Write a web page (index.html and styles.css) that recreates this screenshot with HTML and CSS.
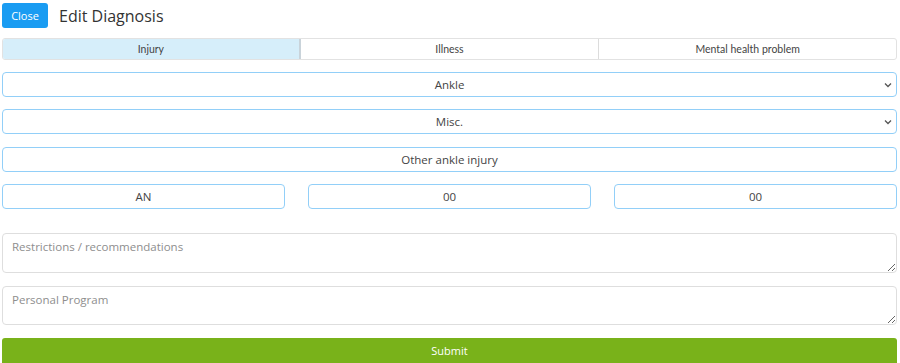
FILE: index.html
```html
<!DOCTYPE html>
<html lang="en">
<head>
    <meta charset="UTF-8">
    <meta name="viewport" content="width=device-width, initial-scale=1.0">
    <title>Edit Diagnosis</title>
    <link rel="stylesheet" href="styles.css">
</head>
<body>
    <div class="container">
        <div class="header">
            <button class="btn-close" type="button">Close</button>
            <h1>Edit Diagnosis</h1>
        </div>
        <div class="tabs">
            <div class="tab active">Injury</div>
            <div class="tab">Illness</div>
            <div class="tab">Mental health problem</div>
        </div>
        <form id="diagnosisForm">
            <div class="select-wrap">
                <select class="field">
                    <option>Ankle</option>
                </select>
                <svg class="chevron" width="8" height="6" viewBox="0 0 8 6"><path d="M1 1.5 L4 4.5 L7 1.5" fill="none" stroke="#555" stroke-width="1.3"/></svg>
            </div>
            <div class="select-wrap">
                <select class="field">
                    <option>Misc.</option>
                </select>
                <svg class="chevron" width="8" height="6" viewBox="0 0 8 6"><path d="M1 1.5 L4 4.5 L7 1.5" fill="none" stroke="#555" stroke-width="1.3"/></svg>
            </div>
            <input class="field" type="text" value="Other ankle injury">
            <div class="code-row">
                <input class="field" type="text" value="AN">
                <input class="field" type="text" value="00">
                <input class="field" type="text" value="00">
            </div>
            <textarea class="note first" placeholder="Restrictions / recommendations"></textarea>
            <textarea class="note" placeholder="Personal Program"></textarea>
            <button class="btn-submit" type="submit">Submit</button>
        </form>
    </div>
</body>
</html>
```
FILE: styles.css
```css
body {
    font-family: "Open Sans", "Noto Sans", sans-serif;
    margin: 0;
    padding: 3px 3px 0 2px;
    background-color: #fff;
    color: #444;
}
.header {
    display: flex;
    align-items: center;
    gap: 11px;
    height: 25px;
}
.btn-close {
    width: 46px;
    height: 25px;
    padding: 0;
    border: none;
    border-radius: 3px;
    background-color: #1a9cf2;
    color: #fff;
    font-family: "Open Sans", sans-serif;
    font-size: 11px;
    cursor: pointer;
}
h1 {
    margin: 0;
    font-size: 16px;
    font-weight: 400;
    color: #333;
}
.tabs {
    box-sizing: border-box;
    display: grid;
    grid-template-columns: 1fr 1fr 1fr;
    margin-top: 10px;
    height: 22px;
    border: 1px solid #e2e2e2;
    border-radius: 3px;
    overflow: hidden;
}
.tab {
    display: flex;
    align-items: center;
    justify-content: center;
    font-family: Lato, sans-serif;
    font-size: 10.5px;
    color: #444;
    border-left: 1px solid #dcdcdc;
}
.tab:first-child {
    border-left: none;
}
.tab.active {
    background-color: #d6eefa;
    border-right: 2px solid #c9d3da;
}
.tab.active + .tab {
    border-left: none;
}
form {
    display: flex;
    flex-direction: column;
    margin-top: 12px;
}
.field {
    box-sizing: border-box;
    width: 100%;
    height: 25px;
    padding: 0 10px;
    border: 1px solid #92cff8;
    border-radius: 4px;
    background: #fff;
    font-family: "Open Sans", sans-serif;
    font-size: 11.5px;
    color: #444;
    text-align: center;
    text-align-last: center;
    outline: none;
}
select.field {
    appearance: none;
    -webkit-appearance: none;
}
.select-wrap {
    position: relative;
    margin-bottom: 12px;
}
.select-wrap + .select-wrap {
    margin-bottom: 13px;
}
.chevron {
    position: absolute;
    right: 5px;
    top: 10px;
}
.code-row {
    display: grid;
    grid-template-columns: 1fr 1fr 1fr;
    gap: 23px;
    margin-top: 12px;
}
.note {
    box-sizing: border-box;
    width: 100%;
    height: 39px;
    margin-top: 13px;
    padding: 5px 9px;
    border: 1px solid #dedede;
    border-radius: 4px;
    font-family: "Open Sans", sans-serif;
    font-size: 11.5px;
    color: #444;
    resize: vertical;
    outline: none;
}
.note.first {
    height: 40px;
    margin-top: 24px;
}
.note::placeholder {
    color: #8e8e8e;
}
.btn-submit {
    height: 25px;
    margin-top: 13px;
    border: none;
    border-radius: 3px 3px 0 0;
    background-color: #79b21a;
    color: #fff;
    font-family: "Open Sans", sans-serif;
    font-size: 11px;
    cursor: pointer;
}
```
